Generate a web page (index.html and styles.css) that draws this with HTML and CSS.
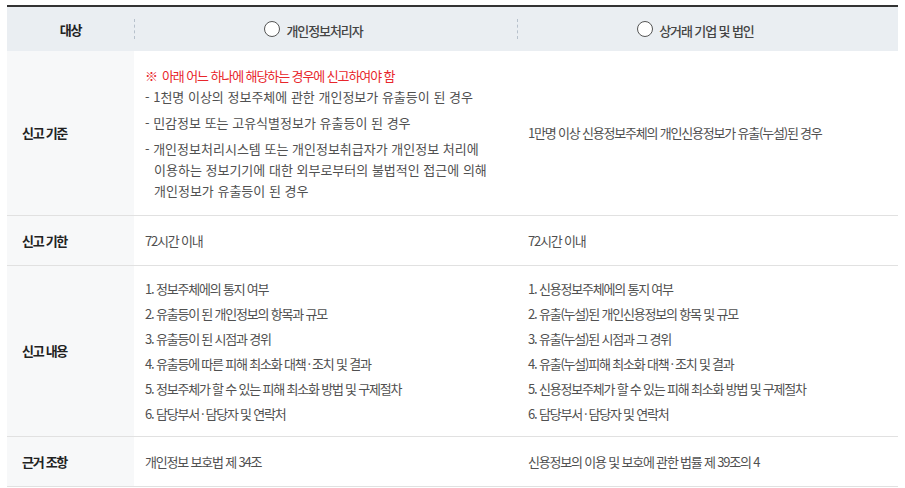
FILE: index.html
```html
<!DOCTYPE html>
<html lang="ko">
<head>
<meta charset="utf-8">
<link rel="stylesheet" href="styles.css">
</head>
<body>
<div class="wrap">
<table class="tbl">
  <colgroup>
    <col class="c1"><col class="c2"><col class="c3">
  </colgroup>
  <thead>
    <tr>
      <th class="h-label">대상</th>
      <th class="h-opt"><span class="sep"></span><span class="radio"></span><span class="opt-txt">개인정보처리자</span></th>
      <th class="h-opt"><span class="sep"></span><span class="radio"></span><span class="opt-txt">상거래 기업 및 법인</span></th>
    </tr>
  </thead>
  <tbody>
    <tr class="r1">
      <th class="label">신고 기준</th>
      <td class="dash-cell">
        <p class="notice">※&nbsp; 아래 어느 하나에 해당하는 경우에 신고하여야 함</p>
        <ul class="dash">
          <li>- 1천명 이상의 정보주체에 관한 개인정보가 유출등이 된 경우</li>
          <li>- 민감정보 또는 고유식별정보가 유출등이 된 경우</li>
          <li>- 개인정보처리시스템 또는 개인정보취급자가 개인정보 처리에<br>이용하는 정보기기에 대한 외부로부터의 불법적인 접근에 의해<br>개인정보가 유출등이 된 경우</li>
        </ul>
      </td>
      <td class="txt">1만명 이상 신용정보주체의 개인신용정보가 유출(누설)된 경우</td>
    </tr>
    <tr class="r2">
      <th class="label">신고 기한</th>
      <td class="txt">72시간 이내</td>
      <td class="txt">72시간 이내</td>
    </tr>
    <tr class="r3">
      <th class="label">신고 내용</th>
      <td class="txt">
        <ol class="num">
          <li>1. 정보주체에의 통지 여부</li>
          <li>2. 유출등이 된 개인정보의 항목과 규모</li>
          <li>3. 유출등이 된 시점과 경위</li>
          <li>4. 유출등에 따른 피해 최소화 대책<span class="dot">·</span>조치 및 결과</li>
          <li>5. 정보주체가 할 수 있는 피해 최소화 방법 및 구제절차</li>
          <li>6. 담당부서<span class="dot">·</span>담당자 및 연락처</li>
        </ol>
      </td>
      <td class="txt">
        <ol class="num">
          <li>1. 신용정보주체에의 통지 여부</li>
          <li>2. 유출(누설)된 개인신용정보의 항목 및 규모</li>
          <li>3. 유출(누설)된 시점과 그 경위</li>
          <li>4. 유출(누설)피해 최소화 대책<span class="dot">·</span>조치 및 결과</li>
          <li>5. 신용정보주체가 할 수 있는 피해 최소화 방법 및 구제절차</li>
          <li>6. 담당부서<span class="dot">·</span>담당자 및 연락처</li>
        </ol>
      </td>
    </tr>
    <tr class="r4">
      <th class="label">근거 조항</th>
      <td class="txt">개인정보 보호법 제 34조</td>
      <td class="txt">신용정보의 이용 및 보호에 관한 법률 제 39조의 4</td>
    </tr>
  </tbody>
</table>
</div>
</body>
</html>
```
FILE: styles.css
```css
html, body {
  margin: 0;
  padding: 0;
  background: #fff;
}
body {
  font-family: "Noto Sans CJK KR", "Noto Sans", sans-serif;
  font-size: 13px;
  color: #505050;
}
.wrap {
  padding: 5px 0 0 7px;
}
.tbl {
  width: 891px;
  border-collapse: collapse;
  table-layout: fixed;
  border-top: 2px solid #333;
}
.c1 { width: 127px; }
.c2 { width: 383px; }
.c3 { width: 381px; }

thead th {
  height: 44px;
  padding: 0;
  background: #eaeef2;
  font-weight: 500;
  color: #444;
  vertical-align: middle;
  position: relative;
}
.h-label {
  font-weight: 700;
  color: #222;
  letter-spacing: -1.2px;
  text-align: center;
}
.h-opt {
  text-align: center;
  padding-right: 24px;
  letter-spacing: -1.1px;
}
.sep {
  position: absolute;
  left: 0;
  top: 12px;
  height: 20px;
  border-left: 1px dashed #b7c1cc;
}
.radio {
  display: inline-block;
  width: 14px;
  height: 14px;
  border: 1.5px solid #555;
  border-radius: 50%;
  background: #fff;
  vertical-align: middle;
  margin-right: 6px;
  position: relative;
  top: -1px;
}
.opt-txt {
  vertical-align: middle;
}

tbody tr {
  border-bottom: 1px solid #e1e1e1;
}
.label {
  background: #f7f8f9;
  text-align: left;
  padding: 0 0 0 15px;
  font-weight: 700;
  color: #222;
  letter-spacing: -1.3px;
  vertical-align: middle;
}
td {
  vertical-align: middle;
  padding: 0 10px 0 11px;
}
.txt {
  letter-spacing: -1.2px;
}
.dot {
  padding: 0 2px;
}
.r1 { height: 164px; }
.r2 { height: 50px; }
.r3 { height: 171px; }
.r4 { height: 50px; }
.r1 td.dash-cell {
  padding-top: 13px;
  padding-bottom: 13px;
}
.notice {
  margin: 0;
  line-height: 21px;
  color: #e8262b;
  letter-spacing: -1.1px;
}
.dash {
  list-style: none;
  margin: 0;
  padding: 0;
  letter-spacing: 0;
}
.dash li {
  line-height: 21px;
  padding-left: 9px;
  text-indent: -9px;
}
.dash li + li {
  margin-top: 5px;
}
.num {
  list-style: none;
  margin: 0;
  padding: 0;
}
.num li {
  line-height: 25px;
}
```
